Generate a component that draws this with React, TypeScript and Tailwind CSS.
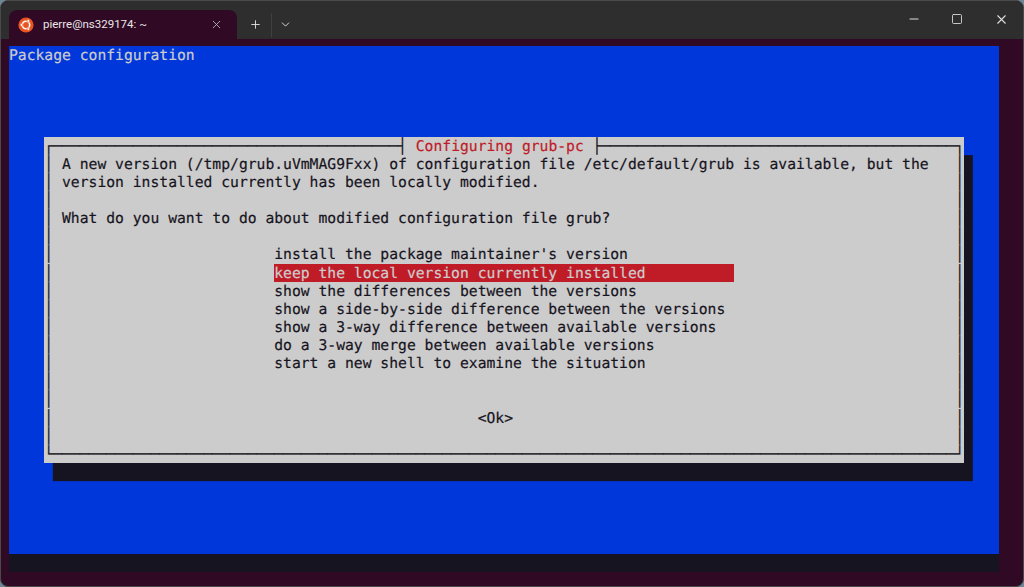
import { ChevronDown, Minus, Plus, Square, X } from 'lucide-react'

const options = [
  "install the package maintainer's version",
  'keep the local version currently installed',
  'show the differences between the versions',
  'show a side-by-side difference between the versions',
  'show a 3-way difference between available versions',
  'do a 3-way merge between available versions',
  'start a new shell to examine the situation',
]

function Row({ children }: { children?: React.ReactNode }) {
  return <div className="flex h-[18.14px] leading-[20px] whitespace-pre">{children}</div>
}

// a dialog row: side borders plus content, cells are 1ch wide
function BoxRow({ children }: { children?: React.ReactNode }) {
  return (
    <Row>
      <span className="w-[1ch]">│</span>
      <span className="w-[102ch]">{children}</span>
      <span className="w-[1ch]">│</span>
    </Row>
  )
}

function UbuntuLogo() {
  return (
    <svg viewBox="0 0 16 16" className="h-4 w-4 shrink-0">
      <circle cx="8" cy="8" r="7.6" fill="#e95420" />
      <circle cx="8" cy="8" r="3.7" fill="none" stroke="#fff" strokeWidth="1.6" />
      <circle cx="3.5" cy="8" r="1.4" fill="#fff" stroke="#e95420" strokeWidth="0.6" />
      <circle cx="10.3" cy="4" r="1.4" fill="#fff" stroke="#e95420" strokeWidth="0.6" />
      <circle cx="10.3" cy="12" r="1.4" fill="#fff" stroke="#e95420" strokeWidth="0.6" />
    </svg>
  )
}

function TitleBar() {
  return (
    <div className="flex h-[38px] shrink-0 items-end bg-[#2e2e2e] pl-2 font-['Roboto',sans-serif] text-[#dcdcdc]">
      <div className="flex h-[29px] w-[228px] items-center rounded-t-lg bg-[#300a24] pr-[14px] pl-[9px]">
        <UbuntuLogo />
        <span className="ml-[9px] flex-1 text-[11.5px] text-[#ece6ea]">pierre@ns329174: ~</span>
        <X size={13} strokeWidth={1.5} className="text-[#c8c0c5]" />
      </div>
      <div className="flex h-[29px] items-center pl-3">
        <Plus size={13} strokeWidth={1.75} />
        <div className="mr-[7px] ml-[9px] h-[24px] w-px bg-[#404040]" />
        <ChevronDown size={13} strokeWidth={1.75} />
      </div>
      <div className="flex h-full flex-1 items-center justify-end pb-[2px]">
        <div className="flex w-[43px] justify-center"><Minus size={14} strokeWidth={1.75} /></div>
        <div className="flex w-[44px] justify-center"><Square size={12} strokeWidth={1.75} /></div>
        <div className="flex w-[44px] justify-center"><X size={15} strokeWidth={1.75} /></div>
      </div>
    </div>
  )
}

export default function App() {
  return (
    <div className="h-[587px] w-[1024px] overflow-hidden bg-[#6d8796]">
      <div className="flex h-full flex-col overflow-hidden rounded-lg border border-[#4a4a4a] bg-[#300a24]">
        <TitleBar />
        <div className="pt-[7px] pl-2 font-['DejaVu_Sans_Mono',monospace] text-[14.7px] [-webkit-text-stroke:0.2px] [text-rendering:geometricPrecision]">
          <div className="h-[508px] w-[112ch] bg-[#0037da] text-[#cccccc]">
            <Row>Package configuration</Row>
            <div className="mt-[72.56px] ml-[4ch] w-[104ch] bg-[#cccccc] text-[#171421] shadow-[1ch_18.14px_0_#171421]">
              <Row>
                ┌{'─'.repeat(39)}┤ <span className="text-[#c01c28]">Configuring grub-pc</span> ├{'─'.repeat(40)}┐
              </Row>
              <BoxRow> A new version (/tmp/grub.uVmMAG9Fxx) of configuration file /etc/default/grub is available, but the</BoxRow>
              <BoxRow> version installed currently has been locally modified.</BoxRow>
              <BoxRow />
              <BoxRow> What do you want to do about modified configuration file grub?</BoxRow>
              <BoxRow />
              {options.map((option, i) => (
                <BoxRow key={option}>
                  <span className={i === 1 ? 'ml-[25ch] inline-block h-[18.14px] w-[52ch] bg-[#c01c28] text-[#cccccc]' : 'ml-[25ch] inline-block w-[52ch]'}>
                    {option}
                  </span>
                </BoxRow>
              ))}
              <BoxRow />
              <BoxRow />
              <BoxRow><span className="ml-[48ch]">{'<Ok>'}</span></BoxRow>
              <BoxRow />
              <Row>└{'─'.repeat(102)}┘</Row>
            </div>
          </div>
          <div className="h-[18px] w-[112ch] bg-[#171421]" />
        </div>
      </div>
    </div>
  )
}
